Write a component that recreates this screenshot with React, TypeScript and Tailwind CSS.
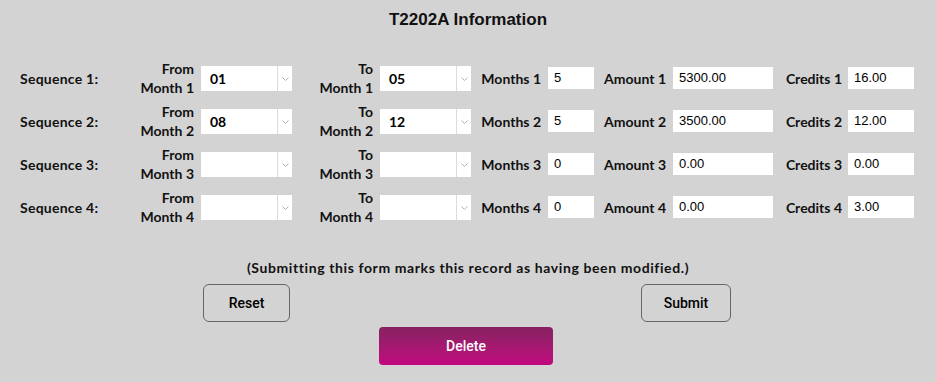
import React from "react";

const rows = [
  { n: 1, from: "01", to: "05", months: "5", amount: "5300.00", credits: "16.00" },
  { n: 2, from: "08", to: "12", months: "5", amount: "3500.00", credits: "12.00" },
  { n: 3, from: "", to: "", months: "0", amount: "0.00", credits: "0.00" },
  { n: 4, from: "", to: "", months: "0", amount: "0.00", credits: "3.00" },
];

function MonthSelect({ value }: { value: string }) {
  return (
    <div className="flex h-[25px] w-[91px] bg-white">
      <div className="flex flex-1 items-center pl-[9px] text-[14px] font-bold text-black">{value}</div>
      <div className="flex w-[15px] items-center justify-center border-l border-[#dcdcdc]">
        <svg width="7" height="4" viewBox="0 0 7 4" className="mt-[1px]">
          <path d="M0.5 0.5 L3.5 3.5 L6.5 0.5" fill="none" stroke="#b0b0b0" strokeWidth="1" />
        </svg>
      </div>
    </div>
  );
}

function TextBox({ value, w }: { value: string; w: string }) {
  return (
    <div
      className={`flex h-[22px] items-center bg-white pl-[6px] text-[13px] font-normal text-black ${w}`}
      style={{ fontFamily: '"Liberation Sans", Arial, sans-serif' }}
    >
      {value}
    </div>
  );
}

export default function App() {
  return (
    <div
      className="h-[382px] w-[936px] bg-[#d3d3d3] text-[#111]"
      style={{ fontFamily: "Lato, sans-serif" }}
    >
      <h1
        className="pt-[10px] text-center text-[17px] font-bold leading-[20px]"
        style={{ fontFamily: '"Liberation Sans", Arial, sans-serif' }}
      >
        T2202A Information
      </h1>

      <div className="mt-[29px] flex flex-col gap-[5px] pl-[20px]">
        {rows.map((r) => (
          <div key={r.n} className="flex h-[38px] items-center whitespace-nowrap text-[14px] font-bold">
            <div className="w-[100px] tracking-[0.25px]">Sequence {r.n}:</div>
            <div className="w-[74px] text-right leading-[19px]">
              From
              <br />
              Month {r.n}
            </div>
            <div className="ml-[7px]">
              <MonthSelect value={r.from} />
            </div>
            <div className="w-[81px] text-right leading-[19px]">
              To
              <br />
              Month {r.n}
            </div>
            <div className="ml-[7px]">
              <MonthSelect value={r.to} />
            </div>
            <div className="ml-[9px] w-[61px] text-right">Months {r.n}</div>
            <div className="ml-[7px]">
              <TextBox value={r.months} w="w-[46px]" />
            </div>
            <div className="ml-[9px] w-[63px] text-right">Amount {r.n}</div>
            <div className="ml-[7px]">
              <TextBox value={r.amount} w="w-[100px]" />
            </div>
            <div className="ml-[9px] w-[60px] text-right">Credits {r.n}</div>
            <div className="ml-[6px]">
              <TextBox value={r.credits} w="w-[66px]" />
            </div>
          </div>
        ))}
      </div>

      <p className="mt-[32px] text-center text-[14px] font-bold leading-[20px] tracking-[0.6px]">
        (Submitting this form marks this record as having been modified.)
      </p>

      <div
        className="mt-[6px] flex justify-between pl-[203px] pr-[205px]"
        style={{ fontFamily: "Roboto, sans-serif" }}
      >
        <button className="h-[38px] w-[87px] rounded-[6px] border border-[#666] text-[14px] font-medium text-black">
          Reset
        </button>
        <button className="h-[38px] w-[90px] rounded-[6px] border border-[#666] text-[14px] font-medium text-black">
          Submit
        </button>
      </div>

      <div className="mt-[5px] flex justify-center pr-[4px]" style={{ fontFamily: "Roboto, sans-serif" }}>
        <button className="h-[38px] w-[174px] rounded-[4px] bg-gradient-to-b from-[#862062] to-[#c2047e] text-[14px] font-medium text-white">
          Delete
        </button>
      </div>
    </div>
  );
}
